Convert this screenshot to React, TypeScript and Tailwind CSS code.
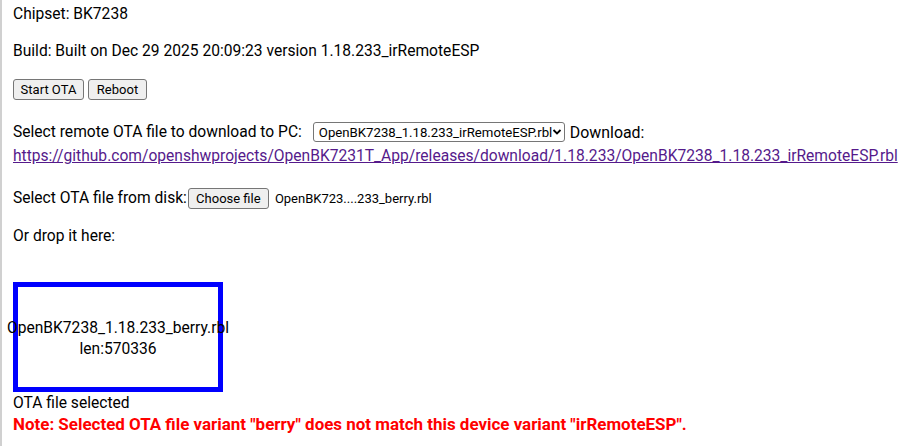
import React from "react";

function Chevron() {
  return (
    <svg width="10" height="8" viewBox="0 0 10 8" className="shrink-0">
      <path d="M1.5 2 L5 5.5 L8.5 2" fill="none" stroke="#000" strokeWidth="1.8" />
    </svg>
  );
}

const btn =
  "inline-flex items-center bg-[#efefef] border border-[#767676] rounded-[3px] px-[6px] text-[13px] leading-[17px] h-[21px] text-black";

export default function App() {
  return (
    <div className="min-h-[446px] border-l-2 border-[#d0d0d0] pl-[11px] font-['Roboto',sans-serif] text-[15.6px] leading-[21px] text-black bg-white">
      <div className="pt-[4px] h-[25px]">Chipset: BK7238</div>
      <div className="mt-[16px] h-[21px]">Build: Built on Dec 29 2025 20:09:23 version 1.18.233_irRemoteESP</div>
      <div className="mt-[17px] flex gap-[4px] h-[21px]">
        <span className={btn + " w-[71px] justify-center"}>Start OTA</span>
        <span className={btn + " w-[59px] justify-center"}>Reboot</span>
      </div>
      <div className="mt-[21px] flex items-center h-[22px]">
        <span>Select remote OTA file to download to PC:</span>
        <span className="ml-[11px] inline-flex items-center justify-between w-[252px] h-[20px] border border-[#767676] rounded-[3px] pl-[5px] pr-[3px] text-[13.2px] bg-white">
          <span>OpenBK7238_1.18.233_irRemoteESP.rbl</span>
          <Chevron />
        </span>
        <span className="ml-[5px] text-[15.9px]">Download:</span>
      </div>
      <div className="mt-[2px] h-[22px] leading-[22px]">
        <a className="text-[#551a8b] underline">
          https://github.com/openshwprojects/OpenBK7231T_App/releases/download/1.18.233/OpenBK7238_1.18.233_irRemoteESP.rbl
        </a>
      </div>
      <div className="mt-[20px] flex items-center h-[22px]">
        <span>Select OTA file from disk:</span>
        <span className={btn + " w-[81px] justify-center ml-[1px]"}>Choose file</span>
        <span className="ml-[6px] text-[13px]">OpenBK723....233_berry.rbl</span>
      </div>
      <div className="mt-[17px] h-[21px]">Or drop it here:</div>
      <div className="mt-[35px] w-[210px] h-[110px] border-[5px] border-[#0000ff] flex flex-col items-center justify-center text-center whitespace-nowrap pt-[3px]">
        <div>OpenBK7238_1.18.233_berry.rbl</div>
        <div>len:570336</div>
      </div>
      <div className="h-[21px] pt-[1px]">OTA file selected</div>
      <div className="h-[21px] mt-[1px] font-bold text-[16.95px] text-[#ff0000]">
        Note: Selected OTA file variant "berry" does not match this device variant "irRemoteESP".
      </div>
    </div>
  );
}
